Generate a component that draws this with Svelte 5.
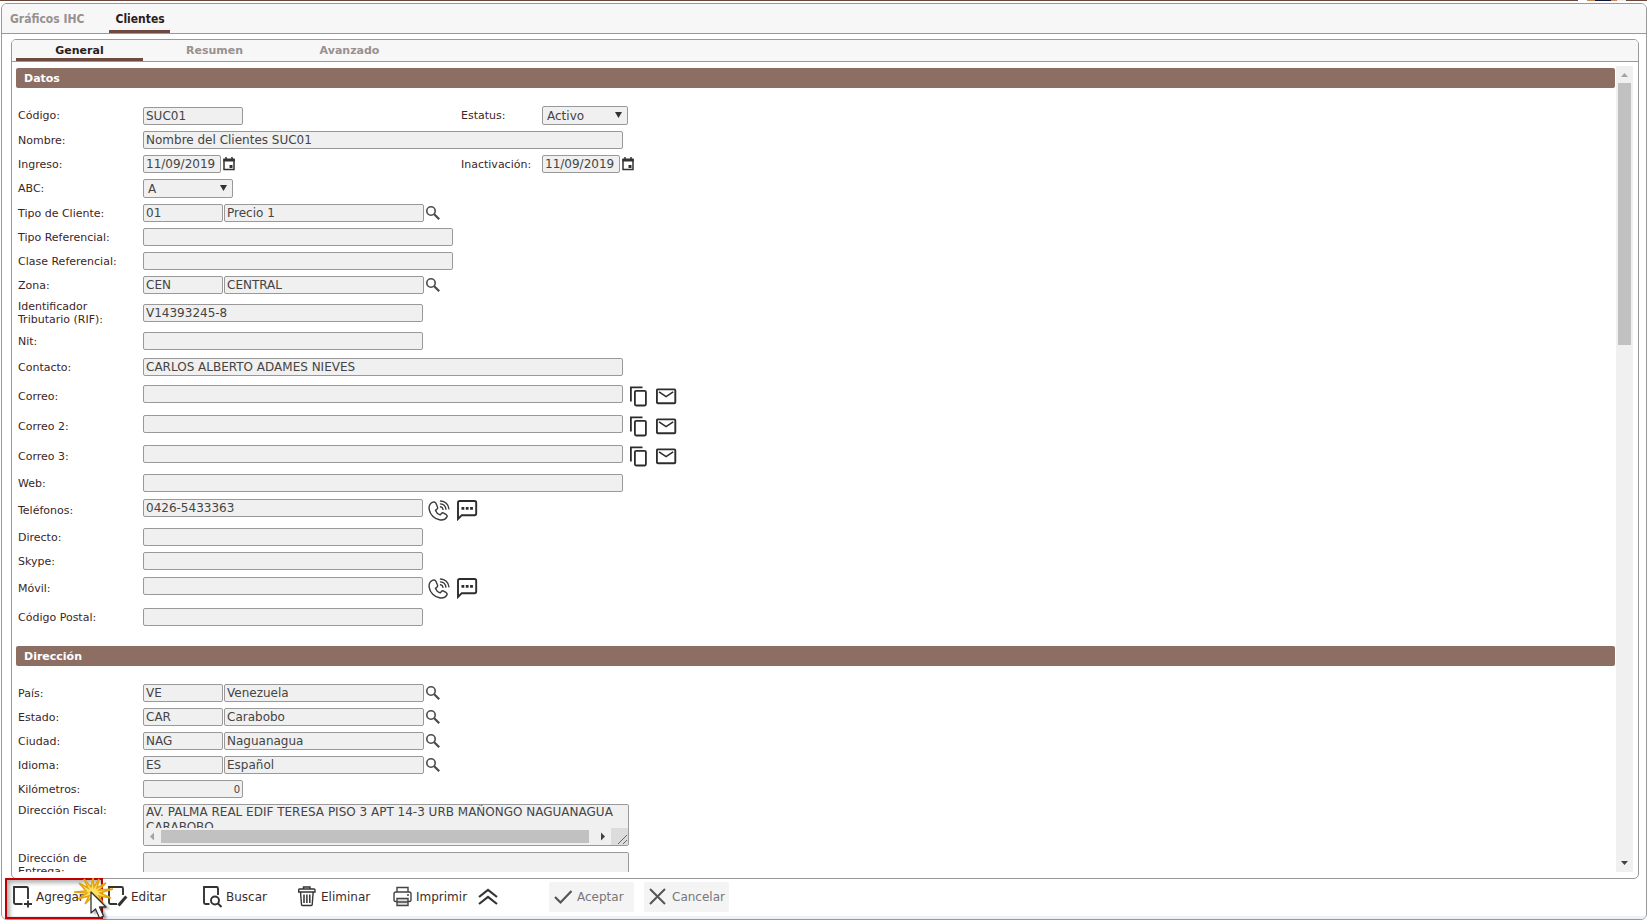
<script lang="ts">
	interface Field {
		id: string;
		label: string;
		type: 'text' | 'date' | 'select' | 'lookup' | 'number';
		value?: string;
		name?: string;
		width?: 'short' | 'medium' | 'ref' | 'long';
		size?: 'lg' | 'xl' | 'double';
		actions?: 'mail' | 'phone';
		side?: Field;
	}

	const datos: Field[] = [
		{
			id: 'codigo',
			label: 'Código:',
			type: 'text',
			value: 'SUC01',
			width: 'short',
			side: { id: 'estatus', label: 'Estatus:', type: 'select', value: 'Activo' }
		},
		{ id: 'nombre', label: 'Nombre:', type: 'text', value: 'Nombre del Clientes SUC01', width: 'long' },
		{
			id: 'ingreso',
			label: 'Ingreso:',
			type: 'date',
			value: '11/09/2019',
			side: { id: 'inactivacion', label: 'Inactivación:', type: 'date', value: '11/09/2019' }
		},
		{ id: 'abc', label: 'ABC:', type: 'select', value: 'A' },
		{ id: 'tipo', label: 'Tipo de Cliente:', type: 'lookup', value: '01', name: 'Precio 1' },
		{ id: 'tipo-ref', label: 'Tipo Referencial:', type: 'text', width: 'ref' },
		{ id: 'clase-ref', label: 'Clase Referencial:', type: 'text', width: 'ref' },
		{ id: 'zona', label: 'Zona:', type: 'lookup', value: 'CEN', name: 'CENTRAL' },
		{ id: 'rif', label: 'Identificador Tributario (RIF):', type: 'text', value: 'V14393245-8', width: 'medium', size: 'double' },
		{ id: 'nit', label: 'Nit:', type: 'text', width: 'medium' },
		{ id: 'contacto', label: 'Contacto:', type: 'text', value: 'CARLOS ALBERTO ADAMES NIEVES', width: 'long', size: 'lg' },
		{ id: 'correo', label: 'Correo:', type: 'text', width: 'long', size: 'xl', actions: 'mail' },
		{ id: 'correo2', label: 'Correo 2:', type: 'text', width: 'long', size: 'xl', actions: 'mail' },
		{ id: 'correo3', label: 'Correo 3:', type: 'text', width: 'long', size: 'xl', actions: 'mail' },
		{ id: 'web', label: 'Web:', type: 'text', width: 'long' },
		{ id: 'telefonos', label: 'Teléfonos:', type: 'text', value: '0426-5433363', width: 'medium', size: 'xl', actions: 'phone' },
		{ id: 'directo', label: 'Directo:', type: 'text', width: 'medium' },
		{ id: 'skype', label: 'Skype:', type: 'text', width: 'medium' },
		{ id: 'movil', label: 'Móvil:', type: 'text', width: 'medium', size: 'xl', actions: 'phone' },
		{ id: 'postal', label: 'Código Postal:', type: 'text', width: 'medium', size: 'lg' }
	];

	const direccion: Field[] = [
		{ id: 'pais', label: 'País:', type: 'lookup', value: 'VE', name: 'Venezuela' },
		{ id: 'estado', label: 'Estado:', type: 'lookup', value: 'CAR', name: 'Carabobo' },
		{ id: 'ciudad', label: 'Ciudad:', type: 'lookup', value: 'NAG', name: 'Naguanagua' },
		{ id: 'idioma', label: 'Idioma:', type: 'lookup', value: 'ES', name: 'Español' },
		{ id: 'km', label: 'Kilómetros:', type: 'number', value: '0', width: 'short' }
	];

	const fiscal = 'AV. PALMA REAL EDIF TERESA PISO 3 APT 14-3 URB MAÑONGO NAGUANAGUA\nCARABOBO';

	const pages = ['Gráficos IHC', 'Clientes'];
	const sections = ['General', 'Resumen', 'Avanzado'];
	let page = $state('Clientes');
	let section = $state('General');
</script>

{#snippet control(f: Field)}
	{#if f.type === 'select'}
		<span class="select-wrap">
			<select id={f.id} class="box select">
				<option>{f.value}</option>
			</select>
			<svg class="caret" viewBox="0 0 7 6" width="7" height="6" aria-hidden="true"><path d="M0 0h7L3.5 6z" /></svg>
		</span>
	{:else if f.type === 'date'}
		<input id={f.id} class="box date" type="text" value={f.value} />
		<button class="icon-btn" type="button" aria-label="Abrir calendario">
			<svg viewBox="0 0 13 14" width="13" height="14" fill="none" stroke="#333">
				<path d="M1 3v9.5h10V3z" stroke-width="1.5" />
				<path d="M.3 3h11.500" stroke-width="3" />
				<path d="M3 0v3M9 0v3" stroke-width="1.5" />
				<path d="M6.500 8h3v3h-3z" fill="#333" stroke="none" />
			</svg>
		</button>
	{:else if f.type === 'lookup'}
		<input id={f.id} class="box code" type="text" value={f.value} />
		<input class="box desc" type="text" value={f.name} aria-label="{f.label} descripción" />
		<button class="icon-btn" type="button" aria-label="Buscar {f.label}">
			<svg viewBox="0 0 15 15" width="15" height="15" fill="none" stroke="#4a4a4a">
				<circle cx="5" cy="5" r="4.2" stroke-width="1.6" />
				<path d="M8.200 8.200l5 5" stroke-width="2.2" />
			</svg>
		</button>
	{:else}
		<input id={f.id} class="box {f.width}" class:number={f.type === 'number'} type="text" value={f.value ?? ''} />
	{/if}
{/snippet}

{#snippet actions(kind: string)}
	<span class="actions">
		{#if kind === 'mail'}
			<button class="icon-btn" type="button" aria-label="Copiar correo">
				<svg viewBox="0 0 21 21" width="21" height="21" fill="none" stroke="#2d2d2d" stroke-width="1.8">
					<path d="M2.9 15.500V1.400h11.600" />
					<rect x="6.900" y="4.900" width="11" height="14.600" rx="1.2" />
				</svg>
			</button>
			<button class="icon-btn" type="button" aria-label="Enviar correo">
				<svg viewBox="0 0 21 21" width="21" height="21" fill="none" stroke="#2d2d2d">
					<rect x=".9" y="3.4" width="18.400" height="13.800" rx="1" stroke-width="1.9" />
					<path d="M3 5.8l7.1 4.800 7.100-4.800" stroke-width="1.6" />
				</svg>
			</button>
		{:else}
			<button class="icon-btn" type="button" aria-label="Llamar">
				<svg viewBox="0 0 22 21" width="22" height="21" fill="none" stroke="#3a3a3a" stroke-width="1.4" stroke-linejoin="round" stroke-linecap="round">
					<path d="M5 2.200C2 3.400.700 6 1.200 9.300c.8 5.400 5.200 9.600 10.300 10.500 3.300.6 5.800-.3 7.300-2.700.7-1 .3-1.800-.5-2.400l-2.600-1.600c-.9-.5-1.700-.3-2.300.4l-1.300 1.400c-2.100-.8-3.800-2.400-4.600-4.500l1.500-1.300c.7-.7.9-1.400.4-2.300L7.900 3.200C7.300 2 6.200 1.700 5 2.200z" />
					<path d="M12.500 6.800c1.400.2 2.300 1.200 2.500 2.600M12.500 3.900c3 .2 5.100 2.300 5.400 5.200M12.500 1c4.600.2 8 3.500 8.400 7.800" />
				</svg>
			</button>
			<button class="icon-btn" type="button" aria-label="Enviar mensaje">
				<svg viewBox="0 0 21 21" width="21" height="21" fill="none" stroke="#2d2d2d">
					<path d="M1 19V2.600q0-1.600 1.600-1.600h15q1.600 0 1.600 1.600v11q0 1.600-1.600 1.600H4.800z" stroke-width="1.900" />
					<path d="M4.500 8.400h11.500" stroke-width="2.600" stroke-dasharray="2.800 1.500" />
				</svg>
			</button>
		{/if}
	</span>
{/snippet}

{#snippet row(f: Field)}
	<div class="row {f.size ?? ''}" class:with-actions={f.actions}>
		<label for={f.id}>{f.label}</label>
		<div class="field" class:paired={f.side}>
			{@render control(f)}
			{#if f.actions}{@render actions(f.actions)}{/if}
		</div>
		{#if f.side}
			<label class="side-label" for={f.side.id}>{f.side.label}</label>
			<div class="field">{@render control(f.side)}</div>
		{/if}
	</div>
{/snippet}

<div class="app">
	<div class="topline"><span class="avatar"></span></div>
	<main class="window">
		<nav class="page-tabs">
			{#each pages as p}
				<button type="button" class:active={page === p} onclick={() => (page = p)}>{p}</button>
			{/each}
		</nav>

		<div class="panel">
			<nav class="section-tabs">
				{#each sections as s}
					<button type="button" class:active={section === s} onclick={() => (section = s)}>{s}</button>
				{/each}
			</nav>

			<div class="panel-body">
				<form class="scroll-area">
					<h2>Datos</h2>
					<div class="rows">
						{#each datos as f (f.id)}
							{@render row(f)}
						{/each}
					</div>
					<h2>Dirección</h2>
					<div class="rows">
						{#each direccion as f (f.id)}
							{@render row(f)}
						{/each}
						<div class="row area-row">
							<label for="fiscal">Dirección Fiscal:</label>
							<div class="area">
								<textarea id="fiscal" class="box" value={fiscal}></textarea>
								<div class="hscroll" aria-hidden="true">
									<svg viewBox="0 0 17 17" width="17" height="17"><path d="M10 4.500v8l-4-4z" fill="#a3a3a3" /></svg>
									<span class="hthumb"></span>
									<svg viewBox="0 0 17 17" width="17" height="17"><path d="M7 4.500v8l4-4z" fill="#404040" /></svg>
									<svg class="grip" viewBox="0 0 17 17" width="17" height="17"><path d="M7 16l9-9M12 16l4-4" stroke="#666" /></svg>
								</div>
							</div>
						</div>
						<div class="row area-row">
							<label for="entrega">Dirección de Entrega:</label>
							<div class="area"><textarea id="entrega" class="box"></textarea></div>
						</div>
					</div>
				</form>
				<div class="vscroll" aria-hidden="true">
					<svg viewBox="0 0 17 17" width="17" height="17"><path d="M5 11h7L8.500 7z" fill="#a3a3a3" /></svg>
					<div class="vtrack"><div class="vthumb"></div></div>
					<svg viewBox="0 0 17 17" width="17" height="17"><path d="M5 6h7l-3.500 4z" fill="#404040" /></svg>
				</div>
			</div>
		</div>

		<footer class="toolbar">
			<div class="highlighted">
				<button class="tool" type="button">
					<svg viewBox="0 0 20 22" width="20" height="22" fill="none" stroke="#333" stroke-width="1.900">
						<path d="M9.500 18H2.400q-1.400 0-1.400-1.400V1h12.600q1.400 0 1.400 1.400V13M15 14.500v7M11 18h8" />
					</svg>
					Agregar
				</button>
				<svg class="click-mark" viewBox="0 0 40 44" width="40" height="44" aria-hidden="true">
					<path
						d="M19 0l1 9 5-8-2 9 9-5-7 7 14-1-13 4 11 5-12-2 4 7-7-6-2 8-2-8-7 7 4-8-11 3 9-6L0 14l12-1L5 5l9 5-4-9 7 8z"
						fill="#ffdf66"
						stroke="#e3a50c"
						stroke-width="1.500"
					/>
					<path d="M20 17v20l5-4 4 9 4-2-4-9h7z" class="pointer-shadow" />
					<path d="M17 14v21l4.500-4 4 9 4-2-4-9H32z" fill="#fff" stroke="#333" stroke-width="1.300" stroke-linejoin="round" />
				</svg>
			</div>
			<button class="tool" type="button">
				<svg viewBox="0 0 20 22" width="20" height="22" fill="none" stroke="#333" stroke-width="1.900">
					<path d="M9 18H2.400q-1.400 0-1.400-1.400V1h12.600q1.400 0 1.400 1.400V9" />
					<path d="M10.500 19.500l7.800-9" stroke-width="3" />
				</svg>
				Editar
			</button>
			<button class="tool" type="button">
				<svg viewBox="0 0 20 22" width="20" height="22" fill="none" stroke="#333" stroke-width="1.900">
					<path d="M6.500 18H2.400q-1.400 0-1.400-1.400V1h12.600q1.400 0 1.400 1.400V9" />
					<circle cx="12" cy="14.500" r="4" />
					<path d="M15 17.500l3.500 3.500" />
				</svg>
				Buscar
			</button>
			<button class="tool" type="button">
				<svg viewBox="0 0 20 22" width="20" height="22" fill="none" stroke="#333" stroke-width="1.400">
					<path d="M1.500 3h14.500q1 0 1 1v2H.700V4q0-1 .8-1zM5.500 3V1h6.500v2M2.500 6l1 12.500q0 1 1 1h8.700q1 0 1-1L15.200 6" />
					<path d="M6 8.500v8.500M8.900 8.500v8.500M11.800 8.500v8.500" stroke-width="1.500" />
				</svg>
				Eliminar
			</button>
			<button class="tool" type="button">
				<svg viewBox="0 0 20 22" width="20" height="22" fill="none" stroke="#444" stroke-width="1.400">
					<path d="M4 6V1.500h11V6M4 15.500H2.500Q1 15.500 1 14V8q0-2 2-2h13q2 0 2 2v6q0 1.500-1.500 1.500H15" />
					<path d="M4 12.500h11v7H4z" fill="#ddd" />
					<path d="M4 16h11M14 9h2" />
				</svg>
				Imprimir
			</button>
			<button class="tool more" type="button" aria-label="Más opciones">
				<svg viewBox="0 0 20 22" width="20" height="22" fill="none" stroke="#333" stroke-width="2.200">
					<path d="M1 11l9-7 9 7M1 18l9-7 9 7" />
				</svg>
			</button>
			<button class="tool muted" type="button">
				<svg viewBox="0 0 20 22" width="20" height="22" fill="none" stroke="#555" stroke-width="2.200"><path d="M1 11l5.500 5.500L17.500 5" /></svg>
				Aceptar
			</button>
			<button class="tool muted" type="button">
				<svg viewBox="0 0 20 22" width="20" height="22" fill="none" stroke="#555" stroke-width="2"><path d="M1 3l15 15M16 3L1 18" /></svg>
				Cancelar
			</button>
		</footer>
	</main>
</div>

<style>
	:global(body) {
		background: #fff;
	}

	.app {
		display: flex;
		flex-direction: column;
		height: 100vh;
		overflow: hidden;
		color: #333;
		font-family: 'DejaVu Sans', Verdana, sans-serif;
		font-size: 12px;
	}

	.app * {
		box-sizing: border-box;
	}

	button {
		padding: 0;
		border: 0;
		background: none;
		color: inherit;
		font: inherit;
		cursor: pointer;
	}

	svg {
		display: block;
		flex: none;
	}

	.topline {
		display: flex;
		justify-content: flex-end;
		height: 1px;
		margin-bottom: 2px;
		padding-right: 21px;
		background: #6b463d;
	}

	.avatar {
		width: 48px;
		background: linear-gradient(to right, #fff 9px, #c98b5e 9px 17px, #141436 17px 33px, #c98b5e 33px 39px, #eee 39px);
	}

	.window {
		display: flex;
		flex: 1;
		flex-direction: column;
		min-height: 0;
		margin-left: 1px;
		border: 1px solid #999;
		border-radius: 6px;
	}

	.page-tabs,
	.section-tabs {
		display: flex;
		flex: none;
		border-bottom: 1px solid #999;
		background: #f7f7f7;
		color: #999090;
		font-weight: bold;
	}

	.page-tabs {
		gap: 20px;
		height: 30px;
		padding-left: 2px;
		border-radius: 5px 5px 0 0;
		font-family: 'DejaVu Sans Condensed', Tahoma, sans-serif;
	}

	.page-tabs button,
	.section-tabs button {
		border-bottom: 3px solid transparent;
	}

	.page-tabs button {
		padding: 4px 5px 0 6px;
	}

	.page-tabs .active,
	.section-tabs .active {
		border-color: #6f4a40;
		color: #2b1d1d;
	}

	.panel {
		display: flex;
		flex: 1;
		flex-direction: column;
		min-height: 0;
		margin: 5px 7px 0 9px;
		border: 1px solid #999;
		border-radius: 5px;
	}

	.section-tabs {
		gap: 8px;
		height: 22px;
		padding-left: 4px;
		border-radius: 4px 4px 0 0;
		font-size: 11px;
	}

	.section-tabs button {
		width: 127px;
		padding-top: 2px;
	}

	.panel-body {
		display: flex;
		flex: 1;
		min-height: 0;
		padding: 4px 5px 6px 4px;
	}

	.scroll-area {
		flex: 1;
		padding-top: 2px;
		overflow: hidden;
	}

	h2 {
		height: 20px;
		margin: 0 1px 0 0;
		padding: 1px 0 0 8px;
		border-radius: 2px;
		background: #8d6e63;
		color: #fff;
		font-size: 11px;
		line-height: 19px;
	}

	.rows {
		padding: 15px 0 15px 2px;
	}

	.row {
		display: flex;
		align-items: center;
		min-height: 24px;
		padding: 3px 0;
	}

	.row.lg {
		min-height: 28px;
	}

	.row.xl {
		min-height: 30px;
		padding: 2px 0;
	}

	.row.double {
		min-height: 32px;
	}

	label {
		flex: none;
		width: 125px;
		padding-right: 12px;
		color: #3b2626;
		font-size: 11px;
		line-height: 13px;
	}

	.side-label {
		width: 81px;
		padding-right: 0;
	}

	.field {
		display: flex;
		align-items: center;
	}

	.paired {
		width: 318px;
	}

	.box {
		height: 18px;
		margin: 0;
		padding: 0 2px;
		border: 1px solid #999;
		border-radius: 2px;
		background: #f0f0f0;
		color: #444;
		font: inherit;
		line-height: 16px;
	}

	.short {
		width: 100px;
	}

	.medium {
		width: 280px;
	}

	.ref {
		width: 310px;
	}

	.long {
		width: 480px;
	}

	.code {
		width: 80px;
		margin-right: 1px;
	}

	.desc {
		width: 200px;
	}

	.date {
		width: 78px;
	}

	.number {
		font-size: 10px;
		text-align: right;
	}

	.with-actions .box {
		margin-bottom: 4px;
	}

	.select-wrap {
		display: flex;
		position: relative;
	}

	.select {
		width: 90px;
		height: 19px;
		padding: 0 4px;
		appearance: none;
	}

	.side-label + .field .select {
		width: 86px;
	}

	.caret {
		position: absolute;
		top: 6px;
		right: 6px;
		fill: #333;
		pointer-events: none;
	}

	.icon-btn {
		display: block;
		margin-left: 2px;
	}

	.actions {
		display: flex;
		gap: 5px;
		margin-left: 3px;
	}

	.area-row {
		align-items: flex-start;
	}

	.area {
		position: relative;
		width: 486px;
		height: 42px;
	}

	textarea.box {
		display: block;
		width: 100%;
		height: 100%;
		line-height: 15px;
		overflow: hidden;
		resize: none;
		white-space: pre;
	}

	.hscroll {
		display: flex;
		position: absolute;
		right: 1px;
		bottom: 1px;
		left: 1px;
		background: #f0f0f0;
	}

	.hthumb {
		flex: 1;
		margin: 2px 5px 2px 0;
		background: #c1c1c1;
	}

	.grip {
		background: #dcdcdc;
	}

	.vscroll {
		display: flex;
		flex: none;
		flex-direction: column;
		width: 17px;
		background: #f0f0f0;
	}

	.vtrack {
		flex: 1;
		padding: 0 2px;
	}

	.vthumb {
		height: 34%;
		background: #c1c1c1;
	}

	.toolbar {
		display: flex;
		flex: none;
		gap: 10px;
		height: 40px;
		padding: 3px 0 3px 6px;
		border-bottom: 3px solid #edf1f7;
		border-radius: 0 0 5px 5px;
	}

	.tool {
		display: flex;
		align-items: center;
		gap: 3px;
		width: 85px;
		height: 30px;
		padding-left: 5px;
		border-radius: 2px;
		color: #3b2c2c;
		white-space: nowrap;
	}

	.more {
		width: 46px;
		margin-left: -10px;
		margin-right: 20px;
	}

	.muted {
		background: #f4f4f4;
		color: #777;
	}

	.highlighted {
		position: relative;
	}

	.highlighted::before {
		position: absolute;
		inset: -4px -10px -6px -3px;
		border: 2px solid #c00000;
		box-shadow: inset 3px 3px 4px rgba(0, 0, 0, 0.3);
		content: '';
		pointer-events: none;
	}

	.click-mark {
		position: absolute;
		top: -4px;
		right: -21px;
		z-index: 1;
		pointer-events: none;
	}

	.pointer-shadow {
		fill: rgba(0, 0, 0, 0.35);
		filter: blur(1px);
	}
</style>
